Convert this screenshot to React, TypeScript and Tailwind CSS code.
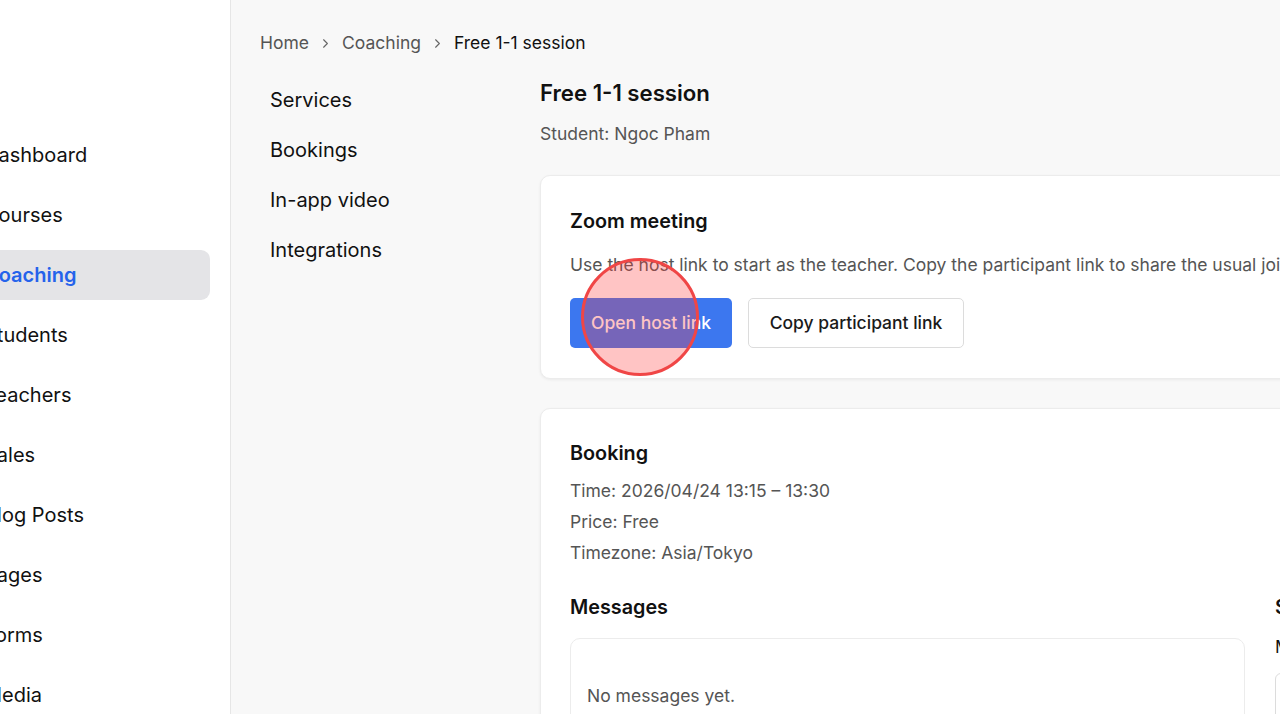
import { ChevronRight } from "lucide-react";

const sidebarItems = [
  "Dashboard",
  "Courses",
  "Coaching",
  "Students",
  "Teachers",
  "Sales",
  "Blog Posts",
  "Pages",
  "Forms",
  "Media",
];

const subNav = ["Services", "Bookings", "In-app video", "Integrations"];

const Sidebar = () => (
  <aside className="w-[231px] shrink-0 bg-white border-r border-[#e6e6e6] overflow-hidden">
    <nav className="ml-[-37px] mr-[20px] mt-[130px] flex flex-col gap-[10px]">
      {sidebarItems.map((item) => (
        <div
          key={item}
          className={
            item === "Coaching"
              ? "h-[50px] flex items-center px-[21px] rounded-[9px] bg-[#e4e4e7] text-[#2563eb] font-semibold text-[20px]"
              : "h-[50px] flex items-center px-[21px] text-[#111] text-[20px]"
          }
        >
          {item}
        </div>
      ))}
    </nav>
  </aside>
);

const Breadcrumb = () => (
  <div className="flex items-center gap-[9px] text-[17.5px] h-[24px]">
    <span className="text-[#555]">Home</span>
    <ChevronRight size={15} className="text-[#666]" strokeWidth={1.8} />
    <span className="text-[#555]">Coaching</span>
    <ChevronRight size={15} className="text-[#666]" strokeWidth={1.8} />
    <span className="text-[#111]">Free 1-1 session</span>
  </div>
);

const ZoomCard = () => (
  <div className="bg-white rounded-[10px] border border-[#ececec] shadow-[0_1px_3px_rgba(0,0,0,0.06)] px-[29px] py-[30px] w-[800px]">
    <h3 className="text-[19.8px] font-semibold text-[#111] leading-[30px]">Zoom meeting</h3>
    <p className="mt-[16px] text-[17.5px] text-[#555] leading-[26px] whitespace-nowrap">
      Use the host link to start as the teacher. Copy the participant link to share the usual join link.
    </p>
    <div className="mt-[20px] flex gap-[16px]">
      <div className="relative">
        <button className="h-[50px] w-[162px] rounded-[5px] bg-[#3c77ef] text-white text-[17.5px] font-medium">
          Open host link
        </button>
        <span className="absolute left-[11px] top-[-40px] w-[118px] h-[118px] rounded-full border-[3px] border-[#f04646] bg-[rgba(255,60,60,0.3)] pointer-events-none" />
      </div>
      <button className="h-[50px] w-[216px] rounded-[5px] bg-white border border-[#dcdcdc] text-[#1a1a1a] text-[17.5px] font-medium">
        Copy participant link
      </button>
    </div>
  </div>
);

const BookingCard = () => (
  <div className="bg-white rounded-[10px] border border-[#ececec] shadow-[0_1px_3px_rgba(0,0,0,0.06)] px-[29px] py-[30px] w-[1000px]">
    <h3 className="text-[19.8px] font-semibold text-[#111] leading-[28px]">Booking</h3>
    <div className="mt-[8px] text-[17.5px] text-[#555] leading-[31px]">
      <p>Time: 2026/04/24 13:15 – 13:30</p>
      <p>Price: Free</p>
      <p>Timezone: Asia/Tokyo</p>
    </div>
    <div className="mt-[24px] grid grid-cols-[675px_1fr] gap-[30px]">
      <div>
        <h3 className="text-[19.8px] font-semibold text-[#111] leading-[30px]">Messages</h3>
        <div className="mt-[16px] border border-[#ececec] rounded-[10px] px-[16px] pt-[45px] pb-[20px] h-[200px]">
          <p className="text-[17.5px] text-[#555] leading-[24px]">No messages yet.</p>
        </div>
      </div>
      <div>
        <h3 className="text-[19.8px] font-semibold text-[#111] leading-[30px]">Send</h3>
        <p className="mt-[13px] text-[17.5px] text-[#111] leading-[24px]">Message</p>
        <div className="mt-[14px] border border-[#dcdcdc] rounded-[6px] h-[100px]" />
      </div>
    </div>
  </div>
);

export default function App() {
  return (
    <div
      className="w-[1280px] h-[714px] overflow-hidden flex bg-[#f8f8f8]"
      style={{ fontFamily: "Inter, 'Noto Sans', sans-serif" }}
    >
      <Sidebar />
      <main className="flex-1 min-w-0 overflow-hidden pl-[29px] pt-[31px]">
        <Breadcrumb />
        <div className="mt-[21px] flex">
          <nav className="w-[280px] shrink-0 flex flex-col -mt-[1px]">
            {subNav.map((item) => (
              <div key={item} className="h-[50px] flex items-center px-[10px] text-[20px] text-[#111]">
                {item}
              </div>
            ))}
          </nav>
          <section className="flex-1 min-w-0">
            <h1 className="text-[22.2px] font-semibold text-[#111] leading-[30px] mt-[2px]">Free 1-1 session</h1>
            <p className="mt-[14px] text-[17.5px] text-[#555] leading-[24px]">Student: Ngoc Pham</p>
            <div className="mt-[29px] flex flex-col gap-[29px] w-[1000px]">
              <ZoomCard />
              <BookingCard />
            </div>
          </section>
        </div>
      </main>
    </div>
  );
}
